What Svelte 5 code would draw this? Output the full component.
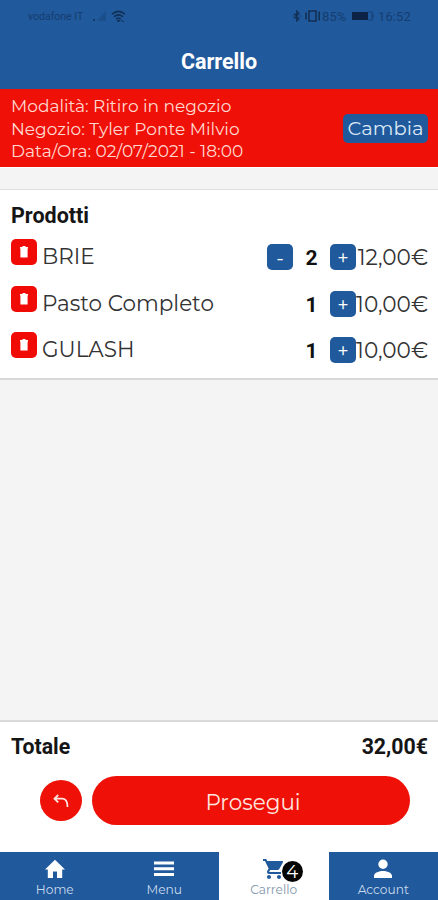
<script>
  let items = $state([
    { name: "BRIE", qty: 2, price: "12,00€" },
    { name: "Pasto Completo", qty: 1, price: "10,00€" },
    { name: "GULASH", qty: 1, price: "10,00€" },
  ]);

  const pickup = [
    "Modalità: Ritiro in negozio",
    "Negozio: Tyler Ponte Milvio",
    "Data/Ora: 02/07/2021 - 18:00",
  ];

  const tabs = [
    { id: "home", label: "Home" },
    { id: "menu", label: "Menu" },
    { id: "cart", label: "Carrello" },
    { id: "account", label: "Account" },
  ];

  let active = $state("cart");
  let count = $derived(items.reduce((sum, item) => sum + item.qty, 0));
</script>

<div class="screen">
  <header>
    <div class="status">
      <span class="carrier">vodafone IT</span>
      <svg class="signal" width="15" height="12" viewBox="0 0 15 12">
        <path d="M1 9h2v2H1z" fill="#123a6c" />
        <path d="M5 11L14 1v10z" fill="#1b4f8c" />
      </svg>
      <svg class="wifi" width="15" height="13" viewBox="0 0 15 13">
        <path
          d="M1 4.2Q7.5-1.5 14 4.2M3 6.8Q7.5 3 12 6.8M5.2 9.2Q7.5 7.4 9.8 9.2"
          fill="none"
          stroke="#122f55"
          stroke-width="1.5"
        />
        <path d="M6.3 10.5h2.4L7.5 12zM10 10l3 2" stroke="#122f55" fill="#122f55" />
      </svg>
      <span class="grow"></span>
      <svg width="10" height="12" viewBox="0 0 10 12">
        <path d="M2 3.5l5 5L4.7 11V1L7 3.5l-5 5M.5 6h1M8 6h1" fill="none" stroke="#122f55" stroke-width="1.2" />
      </svg>
      <svg class="vibrate" width="17" height="12" viewBox="0 0 17 12">
        <path d="M5 1h7v10H5zM2 2.5v7M15.2 1.5v9" fill="none" stroke="#122f55" stroke-width="1.6" />
      </svg>
      <span class="percent">85%</span>
      <svg class="battery" width="24" height="10" viewBox="0 0 24 10">
        <path d="M1 1h16v8H1z" fill="#0c2345" />
        <path d="M17 1h4v8h-4M22.5 3.5v3" fill="none" stroke="#174379" stroke-width="1.2" />
      </svg>
      <span class="clock">16:52</span>
    </div>
    <h1>Carrello</h1>
  </header>

  <section class="pickup">
    <div class="details">
      {#each pickup as line}
        <p>{line}</p>
      {/each}
    </div>
    <button class="change">Cambia</button>
  </section>

  <section class="products">
    <h2>Prodotti</h2>
    {#each items as item}
      <div class="row">
        <button class="square trash" aria-label="Elimina">
          <svg width="10" height="12" viewBox="0 0 10 12">
            <path d="M1 1h2.5V0h3v1H9v1.5H1zM1.4 2h7.2v9.5H1.4z" fill="#fff" />
          </svg>
        </button>
        <span class="name">{item.name}</span>
        {#if item.qty > 1}
          <button class="square minus" onclick={() => item.qty--}>-</button>
        {/if}
        <span class="qty">{item.qty}</span>
        <button class="square plus" onclick={() => item.qty++}>+</button>
        <span class="price">{item.price}</span>
      </div>
    {/each}
  </section>

  <section class="summary">
    <div class="total">
      <span>Totale</span>
      <span>32,00€</span>
    </div>
    <div class="actions">
      <button class="back" aria-label="Indietro">
        <svg width="16" height="14" viewBox="0 0 16 14">
          <path d="M5.2 1L1.5 4.7l3.7 3.6M2 4.7h7.5Q14.5 5 14.5 13" fill="none" stroke="#ffe5df" stroke-width="1.8" />
        </svg>
      </button>
      <button class="proceed">Prosegui</button>
    </div>
  </section>

  <nav>
    {#each tabs as tab}
      <button class="tab" class:active={active === tab.id} onclick={() => (active = tab.id)}>
        <span class="icon">
          <svg width="24" height="24" viewBox="0 0 24 24" fill="currentColor">
            {#if tab.id === "home"}
              <path d="M10 21v-6.5h4V21h5.2v-8.5H22L12 2.7 2 12.500h2.8V21z" />
            {:else if tab.id === "menu"}
              <path d="M2 4.5h20v3H2zM2 10.2h20v3H2zM2 16h20v3H2z" />
            {:else if tab.id === "cart"}
              <path
                d="M7 18c-1.1 0-1.99.9-1.99 2S5.9 22 7 22s2-.9 2-2-.9-2-2-2zM1 2v2h2l3.6 7.59-1.35 2.45c-.16.28-.25.61-.25.96 0 1.1.9 2 2 2h12v-2H7.420c-.14 0-.25-.11-.25-.25l.03-.12.9-1.63h7.45c.75 0 1.41-.41 1.75-1.03l3.58-6.49A1 1 0 0 0 20 4H5.21l-.94-2H1zm16 16c-1.1 0-1.99.9-1.99 2s.89 2 1.99 2 2-.9 2-2-.9-2-2-2z"
              />
            {:else}
              <path d="M12 12a4.700 4.7 0 1 0 0-9.4 4.7 4.7 0 0 0 0 9.4zM3 21v-2.2C3 15.5 8.5 14 12 14s9 1.5 9 4.8V21z" />
            {/if}
          </svg>
          {#if tab.id === "cart"}
            <span class="badge">{count}</span>
          {/if}
        </span>
        <span class="label">{tab.label}</span>
      </button>
    {/each}
  </nav>
</div>

<style>
  :global(body) {
    margin: 0;
    background: #f4f4f4;
  }

  .screen {
    display: flex;
    flex-direction: column;
    width: 438px;
    height: 900px;
    overflow: hidden;
    background: #f4f4f4;
    font-family: Montserrat, Inter, sans-serif;
    color: #333;
  }

  button {
    border: 0;
    padding: 0;
    font-family: inherit;
    color: #fff;
    cursor: pointer;
  }

  h1,
  h2,
  p {
    margin: 0;
  }

  svg {
    display: block;
    flex: none;
  }

  header {
    height: 89px;
    background: #20599c;
  }

  .status {
    display: flex;
    align-items: center;
    height: 32px;
    padding: 0 26px 0 28px;
    font-family: Roboto, sans-serif;
    color: #163d70;
  }

  .carrier {
    width: 64px;
    font-size: 10.5px;
    white-space: nowrap;
  }

  .wifi {
    margin-left: 4px;
  }

  .grow {
    flex: 1;
  }

  .vibrate {
    margin-left: 2px;
  }

  .percent,
  .clock {
    font-size: 13px;
    letter-spacing: 0.1px;
  }

  .percent {
    width: 29px;
    margin-left: 1px;
  }

  .clock {
    width: 34px;
    margin-left: 3px;
  }

  h1 {
    font: 700 21.5px/59px Roboto, sans-serif;
    text-align: center;
    color: #fff;
  }

  .pickup {
    display: flex;
    align-items: center;
    justify-content: space-between;
    height: 78px;
    padding: 0 10px 0 11px;
    background: #ef1008;
    border-bottom: 1px solid #fff;
  }

  .details {
    padding-top: 2px;
  }

  .pickup p {
    font-size: 17px;
    line-height: 22.5px;
    color: #ffd9cf;
    white-space: nowrap;
  }

  .change {
    width: 85px;
    height: 29px;
    border-radius: 5px;
    background: #20599c;
    font-size: 19.5px;
    color: #dbe9f6;
  }

  .products {
    box-sizing: border-box;
    height: 191px;
    margin-top: 21px;
    padding: 9px 10px 0 11px;
    background: #fff;
    border-top: 1px solid #ddd;
    border-bottom: 2px solid #d9d9d9;
  }

  h2 {
    margin-bottom: 1px;
    font: 700 21.5px/34px Roboto, sans-serif;
    color: #151515;
  }

  .row {
    display: flex;
    align-items: center;
    height: 46.5px;
  }

  .square {
    display: flex;
    align-items: center;
    justify-content: center;
    flex: none;
    width: 26px;
    height: 26px;
    border-radius: 5px;
    background: #20599c;
    font-size: 20px;
    line-height: 24px;
  }

  .minus,
  .plus {
    padding-top: 2px;
  }

  .trash {
    margin-bottom: 10px;
    background: #f00b06;
  }

  .name {
    flex: 1;
    margin: 0 0 2px 5px;
    font-size: 21.5px;
  }

  .qty {
    width: 37px;
    padding-top: 2px;
    font: 700 21px/26px Roboto, sans-serif;
    text-align: center;
    color: #111;
  }

  .price {
    width: 72px;
    font-size: 21.6px;
    text-align: right;
    white-space: nowrap;
  }

  .summary {
    box-sizing: border-box;
    height: 132px;
    margin-top: auto;
    background: #fff;
    border-top: 2px solid #d9d9d9;
  }

  .total {
    display: flex;
    justify-content: space-between;
    padding: 0 10px 0 11px;
    font: 700 21.3px/50px Roboto, sans-serif;
    color: #151515;
  }

  .actions {
    display: flex;
    align-items: center;
    gap: 10px;
    padding: 4px 28px 0 40px;
  }

  .back {
    display: flex;
    align-items: center;
    justify-content: center;
    width: 42px;
    height: 41px;
    border-radius: 50%;
    background: #ef1008;
  }

  .proceed {
    flex: 1;
    height: 49px;
    padding: 2px 0 0 4px;
    border-radius: 25px;
    background: #ef1008;
    font-size: 21.5px;
    color: #ffe5df;
  }

  nav {
    display: grid;
    grid-template-columns: repeat(4, 1fr);
    height: 48px;
    background: #20599c;
  }

  .tab {
    display: flex;
    flex-direction: column;
    align-items: center;
    padding-top: 5px;
    background: #20599c;
  }

  .tab.active {
    background: #fff;
    color: #20599c;
  }

  .icon {
    position: relative;
    height: 25px;
  }

  .badge {
    position: absolute;
    top: 4px;
    left: 20px;
    width: 21px;
    height: 21px;
    border-radius: 50%;
    background: #050505;
    font-size: 18px;
    line-height: 22px;
    color: #fff;
  }

  .label {
    font-size: 12.2px;
    line-height: 15px;
    color: #cbdced;
  }

  .active .label {
    color: #7f96aa;
  }
</style>
